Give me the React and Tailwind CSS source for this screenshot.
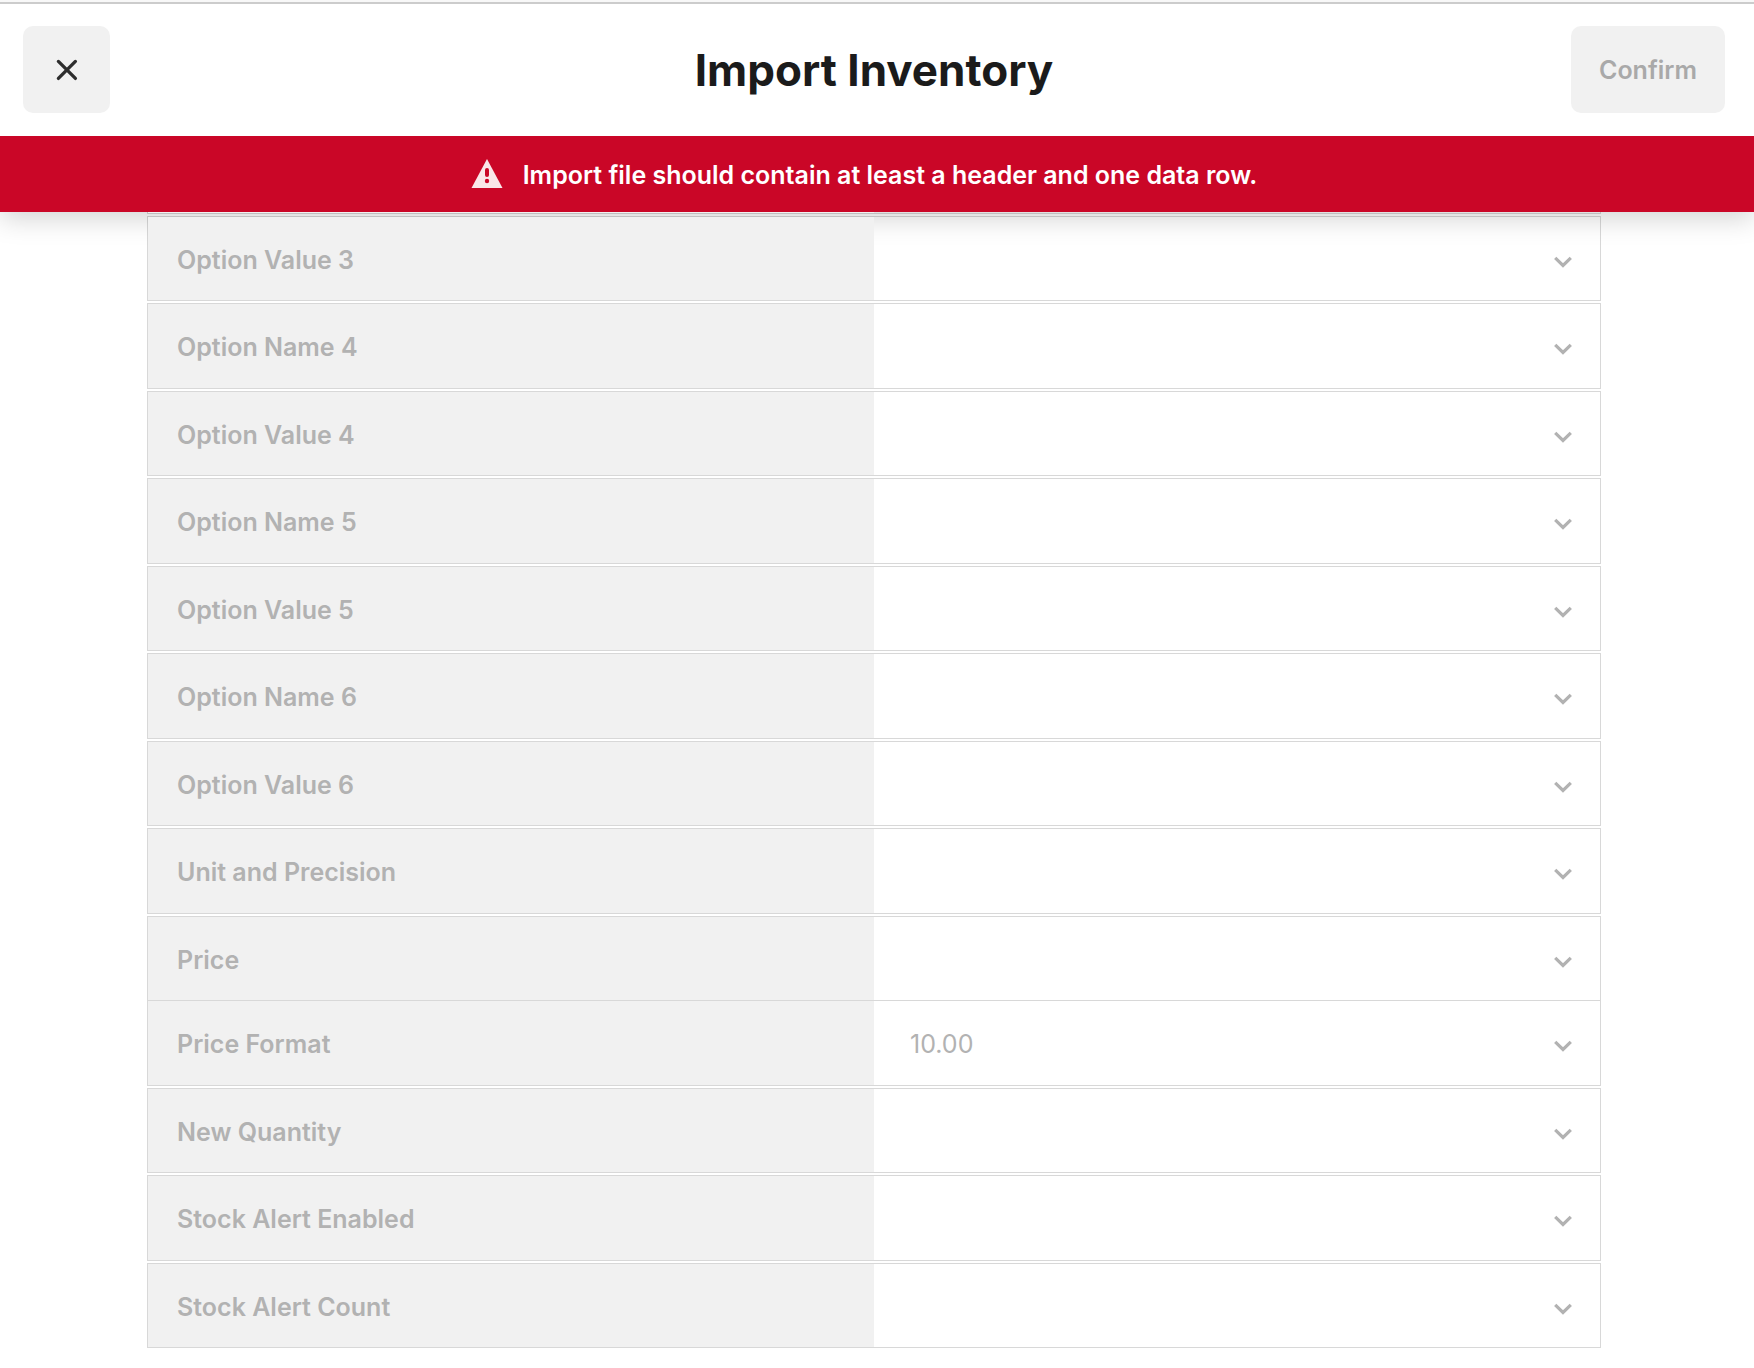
import React from "react";

const before = [
  "Option Value 3",
  "Option Name 4",
  "Option Value 4",
  "Option Name 5",
  "Option Value 5",
  "Option Name 6",
  "Option Value 6",
  "Unit and Precision",
];
const after = ["New Quantity", "Stock Alert Enabled", "Stock Alert Count"];

function Chevron() {
  return (
    <svg
      className="pointer-events-none absolute top-1/2 right-7 -mt-[3px] h-3 w-[18px]"
      viewBox="0 0 18 12"
      fill="none"
      stroke="#b2b2b2"
      strokeWidth="3.2"
      aria-hidden="true"
    >
      <path d="M1.2 1.8 9 9.4l7.8-7.6" />
    </svg>
  );
}

function Field({ label, value = "" }) {
  const id = label.toLowerCase().replaceAll(" ", "-");
  return (
    <div className="grid h-full grid-cols-2">
      <label
        htmlFor={id}
        className="relative z-10 flex items-center bg-[#f1f1f1] pt-1 pl-[29px] text-[25px] font-semibold text-[#b2b2b2]"
      >
        {label}
      </label>
      <div className="relative">
        <select
          id={id}
          disabled
          defaultValue={value}
          className="h-full w-full appearance-none bg-transparent pt-1 pr-16 pl-9 text-[25px] text-[#b2b2b2] opacity-100"
        >
          <option value={value}>{value}</option>
        </select>
        <Chevron />
      </div>
    </div>
  );
}

export default function App() {
  return (
    <div className="flex min-h-screen flex-col bg-white font-['Inter',sans-serif]">
      <header className="relative shadow-[0_6px_26px_rgba(0,0,0,0.18)]">
        <div className="relative z-20 border-t-2 border-[#f8f8f8] bg-white">
          <div className="grid grid-cols-[1fr_auto_1fr] items-center border-t-2 border-[#cccccc] pt-[22px] pr-[29px] pb-[23px] pl-[23px]">
            <button
              type="button"
              aria-label="Close"
              className="flex size-[87px] items-center justify-center rounded-[10px] bg-[#f1f1f1]"
            >
              <svg
                className="size-6"
                viewBox="0 0 24 24"
                fill="none"
                stroke="#2d2d2d"
                strokeWidth="3.3"
                strokeLinecap="round"
                aria-hidden="true"
              >
                <path d="M3.4 3.4 20.4 20.4M20.4 3.4 3.4 20.4" />
              </svg>
            </button>
            <h1 className="text-[44px] leading-[60px] font-bold text-[#1b1b1b]">Import Inventory</h1>
            <button
              type="button"
              disabled
              className="h-[87px] justify-self-end rounded-[10px] bg-[#f1f1f1] px-7 pt-0.5 text-[25px] font-semibold text-[#a9a9a9]"
            >
              Confirm
            </button>
          </div>
        </div>
        <div
          role="alert"
          className="relative z-20 flex h-[76px] items-center justify-center gap-5 bg-[#ca0627] pr-[26px] text-[25px] font-semibold text-white"
        >
          <svg className="h-[30px] w-8" viewBox="0 0 32 30" aria-hidden="true">
            <path d="M16 0 31.5 29H.5Z" fill="#fae6e9" />
            <rect x="14" y="9" width="4" height="9" rx="2" fill="#ca0627" />
            <circle cx="16" cy="22" r="2.2" fill="#ca0627" />
          </svg>
          <p className="pt-1">Import file should contain at least a header and one data row.</p>
        </div>
      </header>

      <main className="pr-1.5 pb-5">
        <form className="mx-auto flex w-full max-w-[1454px] flex-col gap-0.5">
          <div className="grid h-0.5 grid-cols-2 border-x border-b border-[#d8d8d8]">
            <div className="relative z-10 bg-[#f1f1f1]" />
          </div>
          {before.map((label) => (
            <div key={label} className="h-[85px] border border-[#d8d8d8] odd:h-[86px]">
              <Field label={label} />
            </div>
          ))}
          <div className="divide-y divide-[#d8d8d8] border border-[#d8d8d8]">
            <div className="h-[84px]">
              <Field label="Price" />
            </div>
            <div className="h-[84px]">
              <Field label="Price Format" value="10.00" />
            </div>
          </div>
          {after.map((label) => (
            <div key={label} className="h-[85px] border border-[#d8d8d8] even:h-[86px]">
              <Field label={label} />
            </div>
          ))}
        </form>
      </main>
    </div>
  );
}
